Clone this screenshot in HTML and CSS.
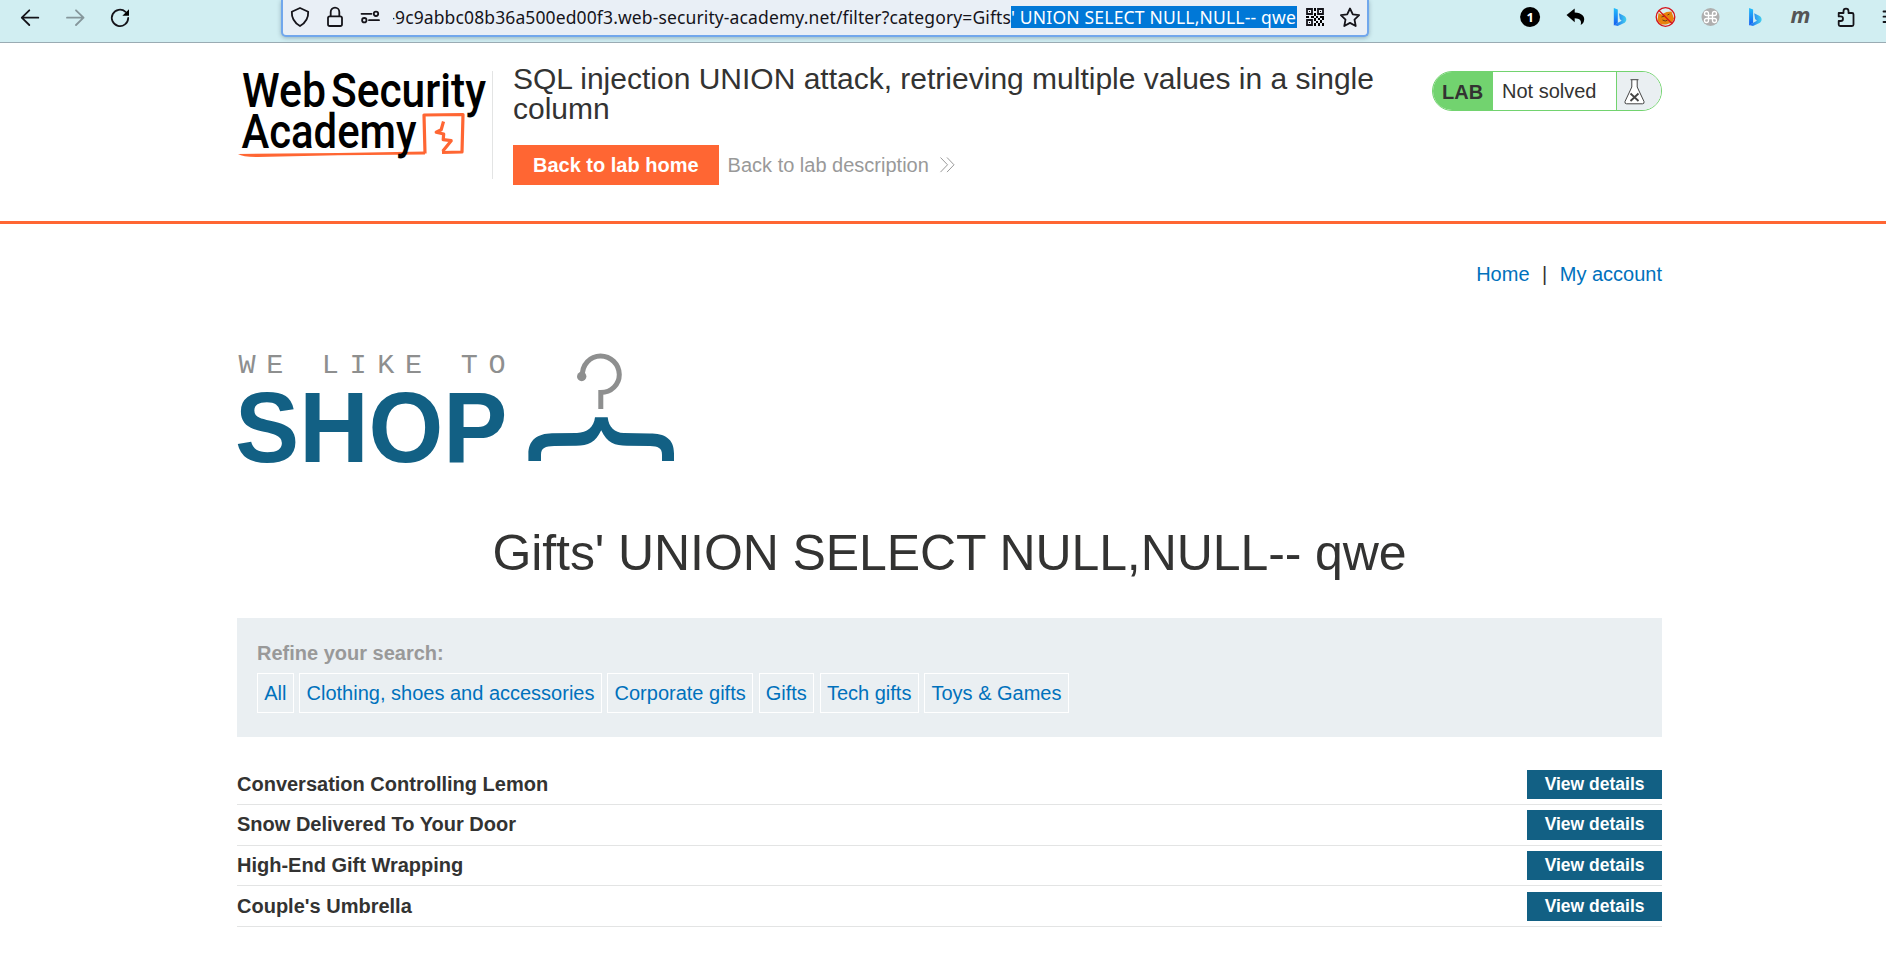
FILE: index.html
```html
<!DOCTYPE html>
<html lang="en">
<head>
<meta charset="utf-8">
<title>SQL injection UNION attack</title>
<link rel="stylesheet" href="styles.css">
</head>
<body>
<div class="toolbar">
  <div class="nav-buttons">
    <svg class="tool" viewBox="8.2 0 45 35"><path d="M38.5 17.7H22M29.5 10.3L22 17.7l7.500 7.300" class="line"/></svg>
    <svg class="tool faded" viewBox="52.5 0 45 35"><path d="M66.500 17.700H83M75.500 10.300l7.500 7.400-7.500 7.300" class="line"/></svg>
    <svg class="tool" viewBox="98 0 45 35"><path d="M125.500 11.800A8.200 8.200 0 1 0 128.200 18" class="line"/><path d="M129 9.300v6.400h-6.600z"/></svg>
  </div>
  <div class="urlbar">
    <svg class="uicon" viewBox="283 0 35 35"><path d="M300 8l8.200 3.700c.3 6-2.200 10.800-8.200 14.300-6-3.500-8.500-8.300-8.200-14.300z" class="line"/></svg>
    <svg class="uicon" viewBox="318 0 35 35"><rect x="328" y="16.300" width="14" height="9.700" rx="1.800" class="line"/><path d="M330.700 16v-4a4.300 4.300 0 0 1 8.600 0v4" class="line"/></svg>
    <svg class="uicon" viewBox="353 0 35 35"><path d="M361.500 13.800h10M369 20.200h10" class="line"/><circle cx="376" cy="13.800" r="2.200" class="line"/><circle cx="364.300" cy="20.200" r="2.200" class="line"/></svg>
    <div class="url"><span class="url-clip">-</span><span class="url-text">9c9abbc08b36a500ed00f3.web-security-academy.net/filter?category=Gifts</span><span class="url-selected">' UNION SELECT NULL,NULL-- qwe</span></div>
    <svg class="uicon" viewBox="1297 0 35 35"><g class="qr"><path d="M1307 9h5v5h-5zM1318 9h5v5h-5zM1307 20h5v5h-5z"/></g><path d="M1309 11h1v1h-1zM1320 11h1v1h-1zM1309 22h1v1h-1zM1314 8h2v3h-2zM1314 13h2v3h-2zM1306 16h3v2h-3zM1311 16h3v2h-3zM1316 16h2v2h-2zM1320 16h4v2h-4zM1314 18h2v3h-2zM1318 18h2v2h-2zM1316 21h2v2h-2zM1320 20h2v3h-2zM1322 18h2v2h-2zM1314 23h2v3h-2zM1318 23h2v3h-2zM1322 23h2v3h-2z"/></svg>
    <svg class="uicon" viewBox="1332 0 35 35"><path d="M1350 8.500l2.800 5.900 6.300.8-4.600 4.500 1.200 6.300-5.700-3.100-5.700 3.100 1.200-6.300-4.600-4.500 6.300-.8z" class="line"/></svg>
  </div>
  <div class="extensions">
    <svg class="tool" viewBox="1507.500 0 45 35"><circle cx="1529.600" cy="17" r="10"/><text x="1529.600" y="22" class="one">1</text></svg>
    <svg class="tool" viewBox="1552.500 0 45 35"><path d="M1566 15l8.200-6.500v4c7 .2 10.800 4.200 9.200 8.700-.5 1.600-1.700 3-3.200 3.800 1.200-4.500-.8-6.700-6-6.800v4z"/></svg>
    <svg class="tool" viewBox="1597.500 0 45 35"><defs><linearGradient id="bing" x1="0" y1="0" x2="0" y2="1"><stop offset="0" stop-color="#21bffa"/><stop offset="1" stop-color="#155df0"/></linearGradient><linearGradient id="bing2" x1="0" y1="0" x2="1" y2="0"><stop offset="0" stop-color="#1b63f2"/><stop offset="1" stop-color="#43d0ef"/></linearGradient></defs><path d="M1613.300 8l4 1.500v13.200l-4 2.800z" fill="url(#bing)"/><path d="M1618.400 13.300l5 2.500c3.500 2 2.700 5.500.8 6.900l-7 3.400-3.900-1 7.800-4.400-1.800-1.700z" fill="url(#bing2)"/></svg>
    <svg class="tool" viewBox="1642.500 0 45 35"><circle cx="1665" cy="17" r="9.300" fill="#d9eef0"/><path d="M1658 13l3 1.500 5-2.500 5-.5 1 3 1.500 4-2 4-6 2h-5l-3.500-4z" fill="#e8820c"/><path d="M1661 17l3-1M1667 15l2-1M1662 20q3 2 5 0" stroke="#643a16" fill="none"/><circle cx="1665" cy="17" r="9.300" class="ban"/><path d="M1658.500 10.500l13 13" class="ban"/></svg>
    <svg class="tool" viewBox="1687.500 0 45 35"><circle cx="1710" cy="17" r="9" fill="#afafaf"/><path d="M1708 15v-1.500a2 2 0 1 0-2 2h8a2 2 0 1 0-2-2v7a2 2 0 1 0 2-2h-8a2 2 0 1 0 2 2z" class="cmd"/></svg>
    <svg class="tool" viewBox="1732.500 0 45 35"><g transform="translate(135.300)"><path d="M1613.300 8l4 1.500v13.200l-4 2.800z" fill="url(#bing)"/><path d="M1618.400 13.300l5 2.500c3.500 2 2.700 5.500.8 6.900l-7 3.400-3.900-1 7.800-4.400-1.800-1.700z" fill="url(#bing2)"/></g></svg>
    <svg class="tool" viewBox="1777.500 0 45 35"><text x="1800" y="22.500" class="em">m</text></svg>
    <svg class="tool" viewBox="1822.500 0 45 35"><path d="M1838.200 13h4.800v-1.800a2.500 2.500 0 0 1 5 0V13h3.500q1.500 0 1.500 1.500v10q0 1.500-1.500 1.500h-11.800q-1.500 0-1.500-1.500V21h2a2.300 2.300 0 0 0 0-4.600h-2z" class="line"/></svg>
    <svg class="edge" viewBox="1867.500 0 18.500 35"><path d="M1883 11.500h10M1883 16.700h10M1883 22h10" class="line"/></svg>
  </div>
</div>

<header class="lab-header">
  <div class="container header-row">
    <svg class="academy" viewBox="237 64 255 110">
      <g class="academy-text">
        <text x="242" y="106.500" textLength="84" lengthAdjust="spacingAndGlyphs">Web</text>
        <text x="331" y="106.500" textLength="155" lengthAdjust="spacingAndGlyphs">Security</text>
      </g>
      <path d="M238 154l100-1 87-1.500v3l-87 .8-80 1.700q-15 0-20-3z" fill="#ff6633"/>
      <path d="M425 153.500l-1-38.500 39-.5-1 37.500-20 .5" class="scribble"/>
      <path d="M443.500 121.500l-2.300 8.300-5 2.500 7.500 1.700-.5 5.700 8 1-8.500 10.500" class="scribble"/>
      <g class="academy-text"><text x="241.500" y="148" textLength="175" lengthAdjust="spacingAndGlyphs">Academy</text></g>
    </svg>
    <div class="title-block">
      <h2>SQL injection UNION attack, retrieving multiple values in a single column</h2>
      <div class="actions">
        <a class="button-orange">Back to lab home</a>
        <a class="back-link">Back to lab description</a>
        <svg class="chevrons" viewBox="0 0 15 16"><path d="M.5.500l7 7.300-7 7.300M7 .500l7 7.300-7 7.300"/></svg>
      </div>
    </div>
    <div class="lab-status">
      <span class="lab-tag">LAB</span>
      <span class="lab-state">Not solved</span>
      <span class="lab-icon"><svg class="flask" viewBox="0 0 21 26"><path d="M6.500.700h8M7.800 1v7L1 22.500q-.5 2.300 1.500 2.300h16q2 0 1.500-2.300L13.200 8V1" fill="#fff"/><path d="M6.500 14.500l8 7.500M14.500 14.500l-8 7.500" class="cross"/></svg></span>
    </div>
  </div>
</header>

<main class="container">
  <nav class="top-links"><a>Home</a><span>|</span><a>My account</a></nav>
  <svg class="shop-logo" viewBox="237 350 440 115">
    <text x="238.500" y="372.500" class="we-like" textLength="267" lengthAdjust="spacing">WE LIKE TO</text>
    <text x="235" y="461.500" class="shop" textLength="272.500" lengthAdjust="spacingAndGlyphs">SHOP</text>
    <circle cx="581.700" cy="376.500" r="4.700" fill="#8e8f8f"/>
    <path d="M582.500 376.500c-1-12 8-20.500 18-20.500a18.800 18.800 0 0 1 18.800 18.500c0 10-8 18-18.500 18V409" class="hook"/>
    <path d="M595 417.300h12.700c1 10 7 15.500 16 15.700l26 .4c15 0 24.300 5 24.300 20v7.500h-12v-6c0-7-4-8.500-12-8.800l-23-.4c-12 0-20-3-25.800-15.500-5.500 12-13 15.500-25 15.500l-22 .4c-9 .3-13.200 1.800-13.200 9v6h-12.600v-7c0-14 9-20.500 23.600-20.800l25-.4c10-.4 17-5.600 18-15.600z" fill="#126084"/>
  </svg>
  <h1>Gifts' UNION SELECT NULL,NULL-- qwe</h1>
  <section class="search-filters">
    <label>Refine your search:</label>
    <div class="tags"><a>All</a><a>Clothing, shoes and accessories</a><a>Corporate gifts</a><a>Gifts</a><a>Tech gifts</a><a>Toys &amp; Games</a></div>
  </section>
  <div class="products">
    <div class="product"><span>Conversation Controlling Lemon</span><a>View details</a></div>
    <div class="product"><span>Snow Delivered To Your Door</span><a>View details</a></div>
    <div class="product"><span>High-End Gift Wrapping</span><a>View details</a></div>
    <div class="product"><span>Couple's Umbrella</span><a>View details</a></div>
  </div>
</main>
</body>
</html>
```
FILE: styles.css
```css
* { box-sizing: border-box; }
body {
  margin: 0;
  height: 962px;
  overflow: hidden;
  background: #fff;
  color: #333332;
  font: 20px/23px "Liberation Sans", Arial, sans-serif;
}
svg { display: block; flex: none; overflow: visible; }

/* Browser toolbar */
.toolbar {
  display: flex;
  height: 43px;
  background: #d1eef2;
  border-bottom: 1px solid #9aabb3;
  overflow: hidden;
}
.nav-buttons { display: flex; width: 281px; padding-left: 7.5px; }
.tool { width: 45px; height: 35px; }
.edge { width: 18.5px; height: 35px; }
.faded { opacity: .4; }
.line { fill: none; stroke: #15141a; stroke-width: 1.8; stroke-linecap: round; stroke-linejoin: round; }
.urlbar {
  display: flex;
  width: 1088px;
  height: 37px;
  padding-right: 1px;
  background: #e9eff6;
  border: 2px solid #71a7ec;
  border-top: 0;
  border-radius: 0 0 5px 5px;
  box-shadow: 0 1px 4px rgba(60, 90, 110, .4);
}
.uicon { width: 35px; height: 35px; }
.url {
  display: flex;
  flex: 1;
  height: 22px;
  margin-top: 6px;
  padding-left: 5px;
  font: 17.5px/22px "Noto Sans", "Open Sans", sans-serif;
  color: #15141a;
  white-space: nowrap;
}
.url-clip { width: 2px; overflow: hidden; direction: rtl; }
.url-text { width: 616px; letter-spacing: .12px; }
.url-selected { width: 286px; background: #0078d7; color: #fff; letter-spacing: .19px; }
.qr path { fill: none; stroke: #15141a; stroke-width: 1.8; }
.extensions { display: flex; margin-left: auto; }
.one { font: bold 13px "Open Sans", sans-serif; fill: #fff; text-anchor: middle; }
.em { font: italic bold 22px "Open Sans", sans-serif; fill: #555; text-anchor: middle; }
.ban { fill: none; stroke: #d5141c; stroke-width: 1.3; }
.cmd { fill: none; stroke: #fff; stroke-width: 1.3; }

/* Lab header */
.container { width: 1425px; margin: 0 auto 0 237px; }
.lab-header { height: 181px; border-bottom: 3px solid #ff6633; }
.header-row { display: flex; align-items: flex-start; padding-top: 21px; }
.academy { width: 255px; height: 110px; }
.academy-text { font: 500 47.500px Roboto, sans-serif; fill: #000; }
.scribble { fill: none; stroke: #ff6633; stroke-width: 3.2; stroke-linejoin: round; }
.title-block {
  display: flex;
  flex-direction: column;
  gap: 21px;
  width: 900px;
  padding-left: 21px;
  background: linear-gradient(#e3e4e4, #e3e4e4) 0 7px / 1px 108px no-repeat;
}
h2 { margin: 0; font-size: 30px; line-height: 30px; font-weight: 400; }
.actions { display: flex; line-height: 40px; }
.button-orange { padding: 0 20px; background: #ff6633; color: #fff; font-weight: 700; }
.back-link { margin-left: 9px; color: #999; }
.chevrons { width: 15px; height: 16px; margin: 12px 0 0 11px; fill: none; stroke: #999; }
.lab-status {
  display: flex;
  width: 230px;
  height: 40px;
  margin: 7px 0 0 auto;
  overflow: hidden;
  border: 1px solid #72d36f;
  border-radius: 20px;
  line-height: 39px;
}
.lab-tag { width: 60px; padding-left: 9px; background: #72d36f; font-weight: 700; line-height: 40px; }
.lab-state { width: 123px; padding-left: 9px; }
.lab-icon { flex: 1; padding: 7px 0 0 7px; border-left: 1px solid #72d36f; background: #eaeff2; }
.flask { width: 21px; height: 26px; fill: none; stroke: #444; stroke-width: 1; }
.cross { stroke-width: 1.8; }

/* Shop */
a { color: #0071bc; }
.top-links { display: flex; justify-content: flex-end; gap: 12.5px; padding-top: 39px; }
.shop-logo { width: 440px; height: 115px; margin-top: 64px; }
.we-like { font: 28.500px "Liberation Mono", monospace; fill: #8e8f8f; }
.shop { font: bold 101px "Liberation Sans", Arial, sans-serif; fill: #126084; }
.hook { fill: none; stroke: #8e8f8f; stroke-width: 5; }
h1 { margin: 62.500px 0 0; font-size: 50px; line-height: 50px; font-weight: 400; text-align: center; letter-spacing: -.09px; }
.search-filters { height: 119px; margin-top: 40.500px; padding: 24px 20px; background: #eaeff2; }
.search-filters label { display: block; color: #999; font-weight: 700; }
.tags { display: flex; gap: 5.560px; margin-top: 8px; }
.tags a { padding: 0 6.250px; border: 1px solid #fff; line-height: 38px; }
.products { margin-top: 27.300px; }
.product {
  display: flex;
  justify-content: space-between;
  height: 40.670px;
  padding-top: 5.500px;
  border-bottom: 1px solid #e3e4e4;
  font-weight: 700;
  line-height: 28px;
}
.product a {
  height: 29.300px;
  padding: 0 17.500px;
  background: #126084;
  color: #fff;
  font-size: 17.500px;
  line-height: 28px;
}
```
